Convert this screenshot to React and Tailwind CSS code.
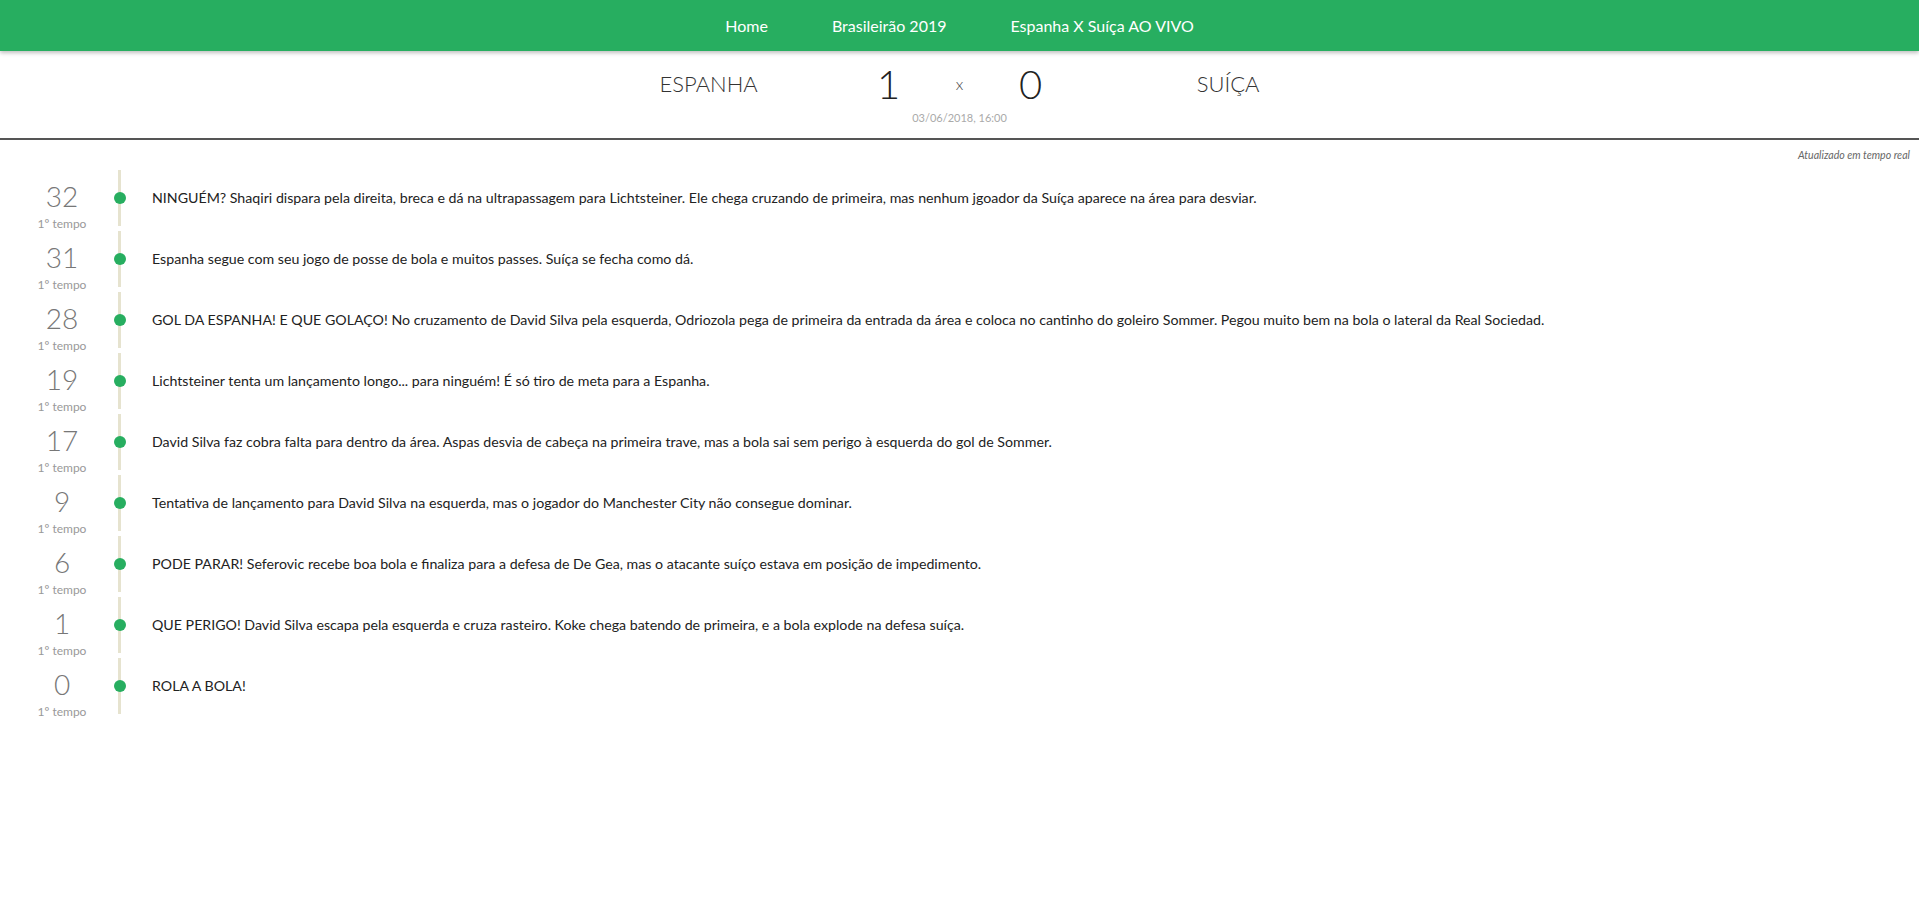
import React from "react";

const events = [
  { min: "32", text: "NINGUÉM? Shaqiri dispara pela direita, breca e dá na ultrapassagem para Lichtsteiner. Ele chega cruzando de primeira, mas nenhum jgoador da Suíça aparece na área para desviar." },
  { min: "31", text: "Espanha segue com seu jogo de posse de bola e muitos passes. Suíça se fecha como dá." },
  { min: "28", text: "GOL DA ESPANHA! E QUE GOLAÇO! No cruzamento de David Silva pela esquerda, Odriozola pega de primeira da entrada da área e coloca no cantinho do goleiro Sommer. Pegou muito bem na bola o lateral da Real Sociedad." },
  { min: "19", text: "Lichtsteiner tenta um lançamento longo... para ninguém! É só tiro de meta para a Espanha." },
  { min: "17", text: "David Silva faz cobra falta para dentro da área. Aspas desvia de cabeça na primeira trave, mas a bola sai sem perigo à esquerda do gol de Sommer." },
  { min: "9", text: "Tentativa de lançamento para David Silva na esquerda, mas o jogador do Manchester City não consegue dominar." },
  { min: "6", text: "PODE PARAR! Seferovic recebe boa bola e finaliza para a defesa de De Gea, mas o atacante suíço estava em posição de impedimento." },
  { min: "1", text: "QUE PERIGO! David Silva escapa pela esquerda e cruza rasteiro. Koke chega batendo de primeira, e a bola explode na defesa suíça." },
  { min: "0", text: "ROLA A BOLA!" },
];

const font = { fontFamily: "Lato, 'Open Sans', sans-serif" };

export default function App() {
  return (
    <div className="min-h-[914px] bg-white text-[#222]" style={font}>
      <nav className="relative z-10 flex h-[51px] items-center justify-center bg-[#27ae60] shadow-[0_2px_4px_rgba(0,0,0,0.25)]">
        <a className="px-[32px] text-[16px] text-white">Home</a>
        <a className="px-[32px] text-[16px] text-white">Brasileirão 2019</a>
        <a className="px-[32px] text-[16px] text-white">Espanha X Suíça AO VIVO</a>
      </nav>

      <header className="border-b-2 border-[#555]">
        <div className="mx-auto grid h-[87px] w-[640px] grid-cols-[1fr_auto_1fr] px-5">
          <div className="pt-[18px] text-[22px] font-light leading-[30px] text-[#333]">ESPANHA</div>
          <div className="flex flex-col items-center">
            <div className="flex items-center pt-[10px]">
              <div className="w-[71px] text-center text-[40px] font-light leading-[46px] text-[#222]">1</div>
              <div className="w-[71px] text-center text-[16px] font-light leading-[44px] text-[#444]">x</div>
              <div className="w-[71px] text-center text-[40px] font-light leading-[46px] text-[#222]">0</div>
            </div>
            <div className="mt-[4px] text-[11px] leading-[14px] text-[#aaa]">03/06/2018, 16:00</div>
          </div>
          <div className="pt-[18px] text-right text-[22px] font-light leading-[30px] text-[#333]">SUÍÇA</div>
        </div>
      </header>

      <div className="pr-[9px] pt-[10px] text-right text-[10.6px] italic leading-[10px] text-[#666]">
        Atualizado em tempo real
      </div>

      <div className="mt-[10px]">
        {events.map((e, i) => (
          <div key={i} className="mb-[5px] flex h-[56px]">
            <div className="w-[118px] pl-[6px] pt-[12px] text-center">
              <div className="text-[28px] font-light leading-[28px] text-[#777]">{e.min}</div>
              <div className="mt-[6px] text-[12px] leading-[16px] text-[#999]">1º tempo</div>
            </div>
            <div className="relative w-[3px] bg-[#e6e3cf]">
              <div className="absolute left-1/2 top-1/2 h-[12px] w-[12px] -translate-x-1/2 -translate-y-1/2 rounded-full bg-[#27ae60]" />
            </div>
            <div className="flex items-center pl-[31px] text-[14.2px] leading-[20px] text-[#222]">{e.text}</div>
          </div>
        ))}
      </div>
    </div>
  );
}
